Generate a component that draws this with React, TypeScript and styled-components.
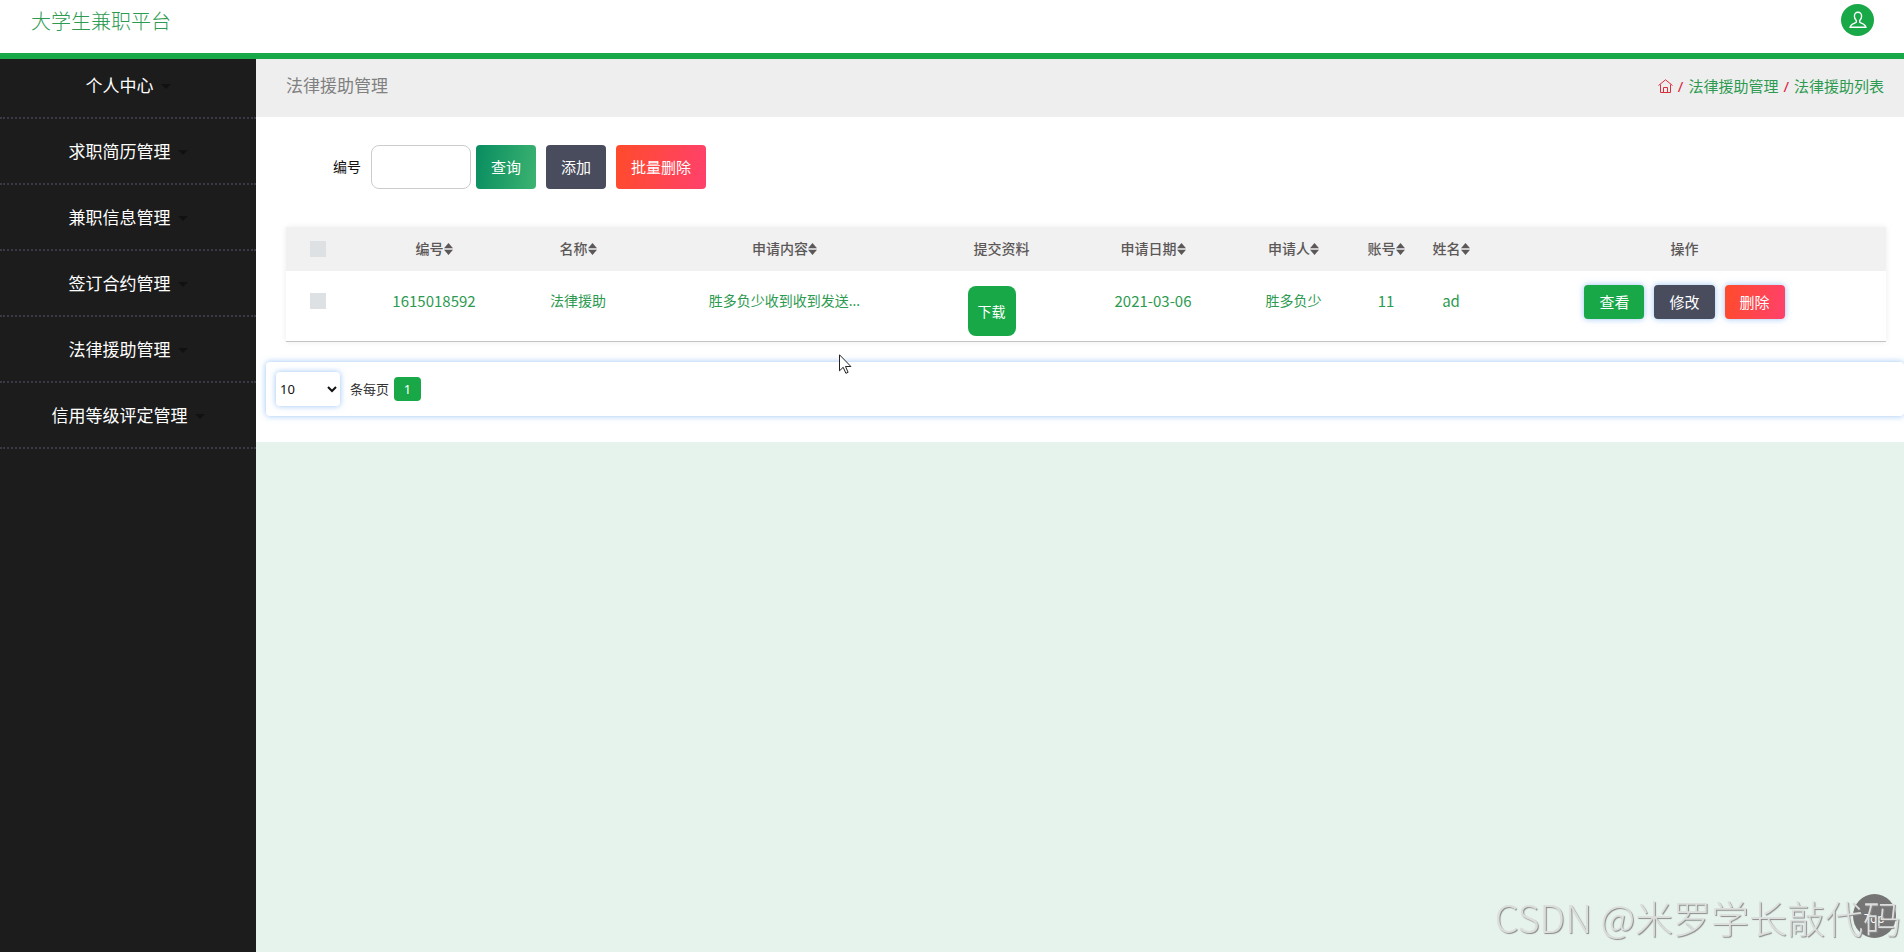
import React from "react";
import styled, { createGlobalStyle, css } from "styled-components";

const green = "#18a848";
const linkGreen = "#2c9a50";
const slate = "#484c5c";
const sunset = "linear-gradient(100deg, #ff4b2b, #ff416c)";
const glow = "0 0 6px rgba(110, 170, 240, 0.7)";

const GlobalStyle = createGlobalStyle`
  * { box-sizing: border-box; }
  html { overflow: hidden; }
  body {
    margin: 0;
    font-family: "Noto Sans", "Noto Sans CJK SC", sans-serif;
    font-size: 14px;
    line-height: 20px;
    color: #111;
    background: #e6f3ec;
  }
  button, input, select { font-family: inherit; }
`;

const Page = styled.div`
  display: flex;
  flex-direction: column;
  min-height: 100vh;
`;

const Header = styled.header`
  display: flex;
  justify-content: space-between;
  align-items: flex-start;
  height: 59px;
  padding: 4px 30px 0 31px;
  background: #fff;
  border-bottom: 6px solid ${green};
`;

const Brand = styled.a`
  margin-top: 8px;
  font-size: 20px;
  font-weight: 300;
  line-height: 20px;
  color: ${linkGreen};
  text-decoration: none;
`;

const Avatar = styled.button`
  display: grid;
  place-items: center;
  width: 33px;
  height: 32px;
  padding: 0;
  border: 0;
  border-radius: 50%;
  background: ${green};
`;

const Body = styled.div`
  display: flex;
  flex: 1;
`;

const Sidebar = styled.nav`
  flex: 0 0 256px;
  background: #1c1c1c;
`;

const Menu = styled.ul`
  margin: 0;
  padding: 0;
  list-style: none;
`;

const MenuItem = styled.li`
  padding: 21px 0 19px;
  border-bottom: 2px dotted #3a3a46;
  &:first-child { padding-top: 15px; }
`;

const MenuLink = styled.a`
  display: flex;
  justify-content: center;
  align-items: center;
  gap: 7px;
  font-size: 17px;
  line-height: 24px;
  color: #fff;
  text-decoration: none;
  &::after {
    content: "";
    border: 5px solid transparent;
    border-top-color: #111;
    border-bottom: 0;
  }
`;

const Main = styled.main`
  flex: 1;
  min-width: 0;
`;

const TitleBar = styled.div`
  display: flex;
  justify-content: space-between;
  align-items: center;
  height: 58px;
  padding: 0 20px 5px 30px;
  background: #eee;
`;

const Title = styled.h1`
  margin: 0;
  font-size: 17px;
  font-weight: 400;
  color: #808080;
`;

const Crumbs = styled.nav`
  display: flex;
  align-items: center;
  gap: 5px;
  font-size: 15px;
  color: #e0203a;
  a { color: ${linkGreen}; text-decoration: none; }
  svg { display: block; }
`;

const Panel = styled.section`
  padding: 28px 0 26px;
  background: #fff;
`;

const Filters = styled.form`
  display: flex;
  align-items: center;
  gap: 10px;
  padding-left: 77px;
`;

const Field = styled.label`
  display: flex;
  align-items: center;
  gap: 10px;
  margin-right: -5px;
`;

const TextInput = styled.input`
  width: 100px;
  height: 44px;
  padding: 0 10px;
  border: 1px solid #ccc;
  border-radius: 8px;
  background: #fff;
`;

const Button = styled.button<{ $bg: string; $small?: boolean }>`
  height: 44px;
  padding: 0 15px;
  border: 0;
  border-radius: 4px;
  background: ${(p) => p.$bg};
  color: #fff;
  font-size: 15px;
  line-height: 20px;
  white-space: nowrap;
  ${(p) => p.$small && css`
    height: 34px;
    box-shadow: ${glow};
  `}
`;

const Table = styled.table`
  width: calc(100% - 48px);
  margin: 38px 18px 0 30px;
  table-layout: fixed;
  border-collapse: collapse;
  text-align: center;
  box-shadow: 0 0 6px rgba(0, 0, 0, 0.08);
`;

const Th = styled.th`
  height: 44px;
  padding: 0;
  background: #f1f1f1;
  color: #5c5858;
  font-size: 14px;
  font-weight: 500;
`;

const SortLabel = styled.span`
  display: inline-flex;
  align-items: center;
`;

const Td = styled.td<{ $latin?: boolean }>`
  height: 70px;
  padding: 14px 0 0;
  border-bottom: 1px solid #c4c4c8;
  color: ${linkGreen};
  font-size: 14px;
  line-height: 32px;
  vertical-align: top;
  ${(p) => p.$latin && css`
    font-family: "Noto Sans CJK SC", sans-serif;
    font-size: 15px;
  `}
`;

const Check = styled.input`
  appearance: none;
  display: block;
  width: 16px;
  height: 16px;
  margin: 0 auto;
  background: #dee1e4;
  ${Td} & { margin-top: 8px; }
`;

const Download = styled.button`
  display: block;
  width: 48px;
  height: 50px;
  margin: 1px auto 0;
  padding: 0;
  border: 0;
  border-radius: 8px;
  background: ${green};
  color: #fff;
  font-size: 14px;
`;

const DownloadCell = styled.div`
  padding-right: 20px;
`;

const Actions = styled.div`
  display: flex;
  justify-content: center;
  gap: 10px;
`;

const Pager = styled.div`
  display: flex;
  align-items: center;
  height: 54px;
  margin: 20px 0 0 10px;
  padding: 0 10px;
  border-radius: 4px;
  background: #fff;
  box-shadow: ${glow};
  font-size: 13px;
  color: #333;
`;

const PageSize = styled.select`
  width: 64px;
  height: 34px;
  margin-right: 10px;
  padding: 0;
  border: 0;
  border-radius: 4px;
  background: #fff;
  box-shadow: ${glow};
  font-size: 13px;
  color: #111;
`;

const PageButton = styled.button`
  width: 27px;
  height: 24px;
  margin-left: 5px;
  padding: 0;
  border: 0;
  border-radius: 4px;
  background: ${green};
  color: #fff;
  font-size: 13px;
`;

const TopButton = styled.button`
  position: fixed;
  right: 8px;
  bottom: 14px;
  width: 43px;
  height: 44px;
  padding: 4px 0 0;
  border: 0;
  border-radius: 50%;
  background: #757575;
  color: #fff;
  font-size: 12px;
`;

const Watermark = styled.div`
  position: fixed;
  right: 3px;
  bottom: 13px;
  font-family: "Noto Sans CJK SC", sans-serif;
  font-size: 38px;
  font-weight: 300;
  line-height: 44px;
  white-space: nowrap;
  color: #dcdedd;
  text-shadow: 1px 1px 1px #8a8a8a;
  pointer-events: none;
`;

const Pointer = styled.svg`
  position: fixed;
  left: 839px;
  top: 354px;
`;

const menu = ["个人中心", "求职简历管理", "兼职信息管理", "签订合约管理", "法律援助管理", "信用等级评定管理"];

const columns: { label: string; width: number; sort?: boolean }[] = [
  { label: "编号", width: 168, sort: true },
  { label: "名称", width: 120, sort: true },
  { label: "申请内容", width: 293, sort: true },
  { label: "提交资料", width: 141 },
  { label: "申请日期", width: 162, sort: true },
  { label: "申请人", width: 119, sort: true },
  { label: "账号", width: 66, sort: true },
  { label: "姓名", width: 64, sort: true },
  { label: "操作", width: 403 },
];

const SortIcon = () => (
  <svg width="9" height="12" viewBox="0 0 9 12" fill="#5c5858" aria-hidden="true">
    <path d="M4.500 0 9 5.200H0zM4.500 12 0 6.800h9z" />
  </svg>
);

const UserIcon = () => (
  <svg width="18" height="18" viewBox="0 0 18 18" fill="none" stroke="#fff" strokeWidth="1.4" aria-hidden="true">
    <path d="M9 1.2c-2.4 0-3.6 1.7-3.6 4 0 2 .8 3.300 1.900 4.300v1.600c-.4.900-5.900 1.700-6.200 5.100h15.800c-.3-3.400-5.800-4.200-6.200-5.100V9.500c1.100-1 1.900-2.300 1.900-4.300 0-2.300-1.200-4-3.600-4z" />
  </svg>
);

const HomeIcon = () => (
  <svg width="15" height="14" viewBox="0 0 15 14" fill="none" stroke="#dc2f3c" aria-hidden="true">
    <path d="M.5 6.500 7.500.8l7 5.700M2.500 5.500v8h10v-8M5.500 13.500v-5h4v5" />
  </svg>
);

export default function App() {
  return (
    <>
      <GlobalStyle />
      <Page>
        <Header>
          <Brand href="#">大学生兼职平台</Brand>
          <Avatar aria-label="个人中心"><UserIcon /></Avatar>
        </Header>
        <Body>
          <Sidebar>
            <Menu>
              {menu.map((m) => (
                <MenuItem key={m}><MenuLink href="#">{m}</MenuLink></MenuItem>
              ))}
            </Menu>
          </Sidebar>
          <Main>
            <TitleBar>
              <Title>法律援助管理</Title>
              <Crumbs>
                <a href="#" aria-label="首页"><HomeIcon /></a>
                <span>/</span>
                <a href="#">法律援助管理</a>
                <span>/</span>
                <a href="#">法律援助列表</a>
              </Crumbs>
            </TitleBar>
            <Panel>
              <Filters onSubmit={(e) => e.preventDefault()}>
                <Field>编号<TextInput type="text" /></Field>
                <Button $bg="linear-gradient(100deg, #088c60, #3cb371)">查询</Button>
                <Button type="button" $bg={slate}>添加</Button>
                <Button type="button" $bg={sunset}>批量删除</Button>
              </Filters>
              <Table>
                <colgroup>
                  <col width={64} />
                  {columns.map((c) => <col key={c.label} width={c.width} />)}
                </colgroup>
                <thead>
                  <tr>
                    <Th><Check type="checkbox" aria-label="全选" /></Th>
                    {columns.map((c) => (
                      <Th key={c.label}>
                        <SortLabel>{c.label}{c.sort && <SortIcon />}</SortLabel>
                      </Th>
                    ))}
                  </tr>
                </thead>
                <tbody>
                  <tr>
                    <Td><Check type="checkbox" aria-label="选择" /></Td>
                    <Td $latin>1615018592</Td>
                    <Td>法律援助</Td>
                    <Td>胜多负少收到收到发送...</Td>
                    <Td><DownloadCell><Download>下载</Download></DownloadCell></Td>
                    <Td $latin>2021-03-06</Td>
                    <Td>胜多负少</Td>
                    <Td $latin>11</Td>
                    <Td $latin>ad</Td>
                    <Td>
                      <Actions>
                        <Button $small $bg={green}>查看</Button>
                        <Button $small $bg={slate}>修改</Button>
                        <Button $small $bg={sunset}>删除</Button>
                      </Actions>
                    </Td>
                  </tr>
                </tbody>
              </Table>
              <Pager>
                <PageSize id="page-size" defaultValue="10">
                  <option>10</option>
                  <option>25</option>
                  <option>50</option>
                </PageSize>
                <label htmlFor="page-size">条每页</label>
                <PageButton>1</PageButton>
              </Pager>
            </Panel>
          </Main>
        </Body>
      </Page>
      <TopButton>Top</TopButton>
      <Watermark>CSDN @米罗学长敲代码</Watermark>
      <Pointer width="13" height="20" viewBox="0 0 13 20" fill="#fff" stroke="#222" aria-hidden="true">
        <path d="M.5.8v16l3.700-3.500 2.700 6 2.200-1-2.600-5.800h5.400z" />
      </Pointer>
    </>
  );
}
